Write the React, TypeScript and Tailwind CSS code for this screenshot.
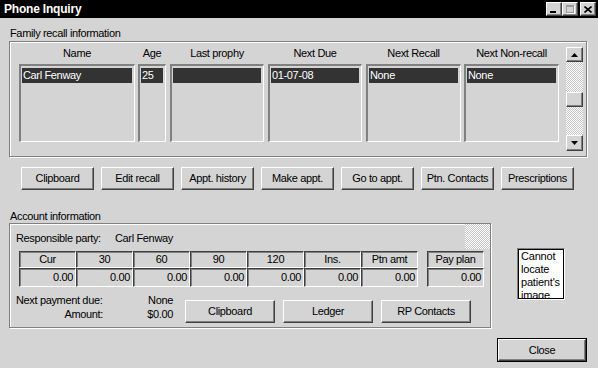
import type { ReactNode } from 'react';

const raised =
  'bg-[#d4d4d4] border border-t-white border-l-white border-r-[#404040] border-b-[#404040] shadow-[inset_-1px_-1px_0_#808080]';
const sunken =
  'border-t-2 border-l-2 border-t-[#808080] border-l-[#808080] border-r border-b border-r-white border-b-white';
const cell =
  'border border-t-[#404040] border-l-[#404040] border-r-white border-b-white shadow-[inset_1px_1px_0_#808080]';
const checker =
  'bg-[image:conic-gradient(#fff_25%,#c6c6c6_0_50%,#fff_0_75%,#c6c6c6_0)] bg-[length:2px_2px]';

const COLUMNS = [
  { title: 'Name', value: 'Carl Fenway', cls: 'w-[116px]' },
  { title: 'Age', value: '25', cls: 'w-[28px] ml-[3px]' },
  { title: 'Last prophy', value: '', cls: 'w-[94px] ml-[4px]' },
  { title: 'Next Due', value: '01-07-08', cls: 'w-[94px] ml-[4px]' },
  { title: 'Next Recall', value: 'None', cls: 'w-[95px] ml-[4px]' },
  { title: 'Next Non-recall', value: 'None', cls: 'w-[95px] ml-[3px]' },
];

const RECALL_BUTTONS = [
  'Clipboard',
  'Edit recall',
  'Appt. history',
  'Make appt.',
  'Go to appt.',
  'Ptn. Contacts',
  'Prescriptions',
];

const AGING = ['Cur', '30', '60', '90', '120', 'Ins.', 'Ptn amt'];

function WinButton({ children, className }: { children: ReactNode; className: string }) {
  return (
    <button type="button" className={`${raised} ${className} flex items-center justify-center text-black`}>
      {children}
    </button>
  );
}

function Arrow({ up }: { up?: boolean }) {
  return (
    <svg width="7" height="4" viewBox="0 0 7 4">
      <path d={up ? 'M3.5 0 L7 4 L0 4 Z' : 'M0 0 L7 0 L3.5 4 Z'} fill="#000" />
    </svg>
  );
}

function TitleBar() {
  return (
    <div className="flex h-[18px] items-center bg-black pl-[4px] pr-[2px]">
      <span className="flex-1 text-[12px] font-bold tracking-[-0.2px] text-white">Phone Inquiry</span>
      <div className="flex items-center">
        <div className={`${raised} relative h-[14px] w-[16px]`}>
          <div className="absolute bottom-[2px] left-[3px] h-[2px] w-[6px] bg-black" />
        </div>
        <div className={`${raised} relative h-[14px] w-[16px]`}>
          <div className="absolute left-[3px] top-[2px] h-[8px] w-[8px] border border-t-2 border-[#9a9a9a] shadow-[1px_1px_0_#fff]" />
        </div>
        <div className={`${raised} ml-[2px] flex h-[14px] w-[16px] items-center justify-center`}>
          <svg width="8" height="7" viewBox="0 0 8 7">
            <path d="M0.5 0.5 L7.5 6.5 M7.5 0.5 L0.5 6.5" stroke="#000" strokeWidth="1.6" />
          </svg>
        </div>
      </div>
    </div>
  );
}

function FamilyRecall() {
  return (
    <div className="ml-[9px] flex h-[116px] w-[578px] border border-[#808080] pl-[9px] pt-[4px] shadow-[inset_1px_1px_0_#fff,1px_1px_0_#fff]">
      {COLUMNS.map((c) => (
        <div key={c.title} className={`${c.cls} flex flex-col`}>
          <div className="h-[14px] text-center leading-[14px]">{c.title}</div>
          <div className={`${sunken} mt-[4px] h-[78px] pl-[1px] pr-[2px] pt-[2px]`}>
            <div className="h-[15px] bg-[#333] px-[1px] leading-[15px] text-white">{c.value}</div>
          </div>
        </div>
      ))}
      <div className="ml-[7px] mt-[1px] flex h-[104px] w-[17px] flex-col">
        <div className={`${raised} flex h-[15px] items-center justify-center`}>
          <Arrow up />
        </div>
        <div className={`${checker} flex-1 pt-[30px]`}>
          <div className={`${raised} h-[15px]`} />
        </div>
        <div className={`${raised} flex h-[16px] items-center justify-center`}>
          <Arrow />
        </div>
      </div>
    </div>
  );
}

function AccountInfo() {
  return (
    <div className="relative ml-[9px] h-[105px] w-[482px] border border-[#808080] pl-[6px] pt-[7px] shadow-[inset_1px_1px_0_#fff,1px_1px_0_#fff]">
      <div className={`${checker} absolute right-0 top-0 h-[25px] w-[25px]`} />
      <div className="flex h-[14px] leading-[14px]">
        <span className="w-[99px]">Responsible party:</span>
        <span>Carl Fenway</span>
      </div>
      <div className="ml-[3px] mt-[6px] flex">
        {AGING.map((a) => (
          <div key={a} className="flex w-[57px] flex-col">
            <div className={`${cell} h-[17px] text-center leading-[15px]`}>{a}</div>
            <div className={`${cell} h-[19px] pr-[2px] text-right leading-[17px]`}>0.00</div>
          </div>
        ))}
        <div className="ml-[9px] flex w-[57px] flex-col">
          <div className={`${cell} h-[17px] text-center leading-[15px]`}>Pay plan</div>
          <div className={`${cell} h-[19px] pr-[2px] text-right leading-[17px]`}>0.00</div>
        </div>
      </div>
      <div className="mt-[6px] flex items-start">
        <div className="flex w-[87px] flex-col text-right leading-[14px]">
          <span className="text-left">Next payment due:</span>
          <span>Amount:</span>
        </div>
        <div className="flex w-[70px] flex-col text-right leading-[14px]">
          <span>None</span>
          <span>$0.00</span>
        </div>
        <div className="ml-[12px] mt-[7px] flex gap-[8px]">
          <WinButton className="h-[23px] w-[90px]">Clipboard</WinButton>
          <WinButton className="h-[23px] w-[90px]">Ledger</WinButton>
          <WinButton className="h-[23px] w-[90px]">RP Contacts</WinButton>
        </div>
      </div>
    </div>
  );
}

export default function App() {
  return (
    <div className="h-[368px] w-[598px] overflow-hidden bg-[#d4d4d4] font-['Liberation_Sans',Arial,sans-serif] text-[11px] tracking-[-0.35px] text-black">
      <TitleBar />
      <div className="ml-[10px] mt-[8px] h-[15px] leading-[15px]">Family recall information</div>
      <FamilyRecall />
      <div className="ml-[21px] mt-[10px] flex gap-[7px]">
        {RECALL_BUTTONS.map((b) => (
          <WinButton key={b} className="h-[23px] w-[73px]">
            {b}
          </WinButton>
        ))}
      </div>
      <div className="ml-[10px] mt-[19px] h-[14px] leading-[14px]">Account information</div>
      <div className="flex items-start">
        <AccountInfo />
        <div className="ml-[26px] mt-[25px] h-[52px] w-[48px] overflow-hidden border border-t-[#808080] border-l-[#808080] border-r-white border-b-white">
          <div className="h-full overflow-hidden border border-black bg-white pl-[2px] text-[11px] leading-[13px] tracking-[-0.2px]">
            Cannot locate patient's image
          </div>
        </div>
      </div>
      <div className="mr-[11px] mt-[10px] flex justify-end">
        <div className="border border-black">
          <WinButton className="h-[22px] w-[88px]">Close</WinButton>
        </div>
      </div>
    </div>
  );
}
